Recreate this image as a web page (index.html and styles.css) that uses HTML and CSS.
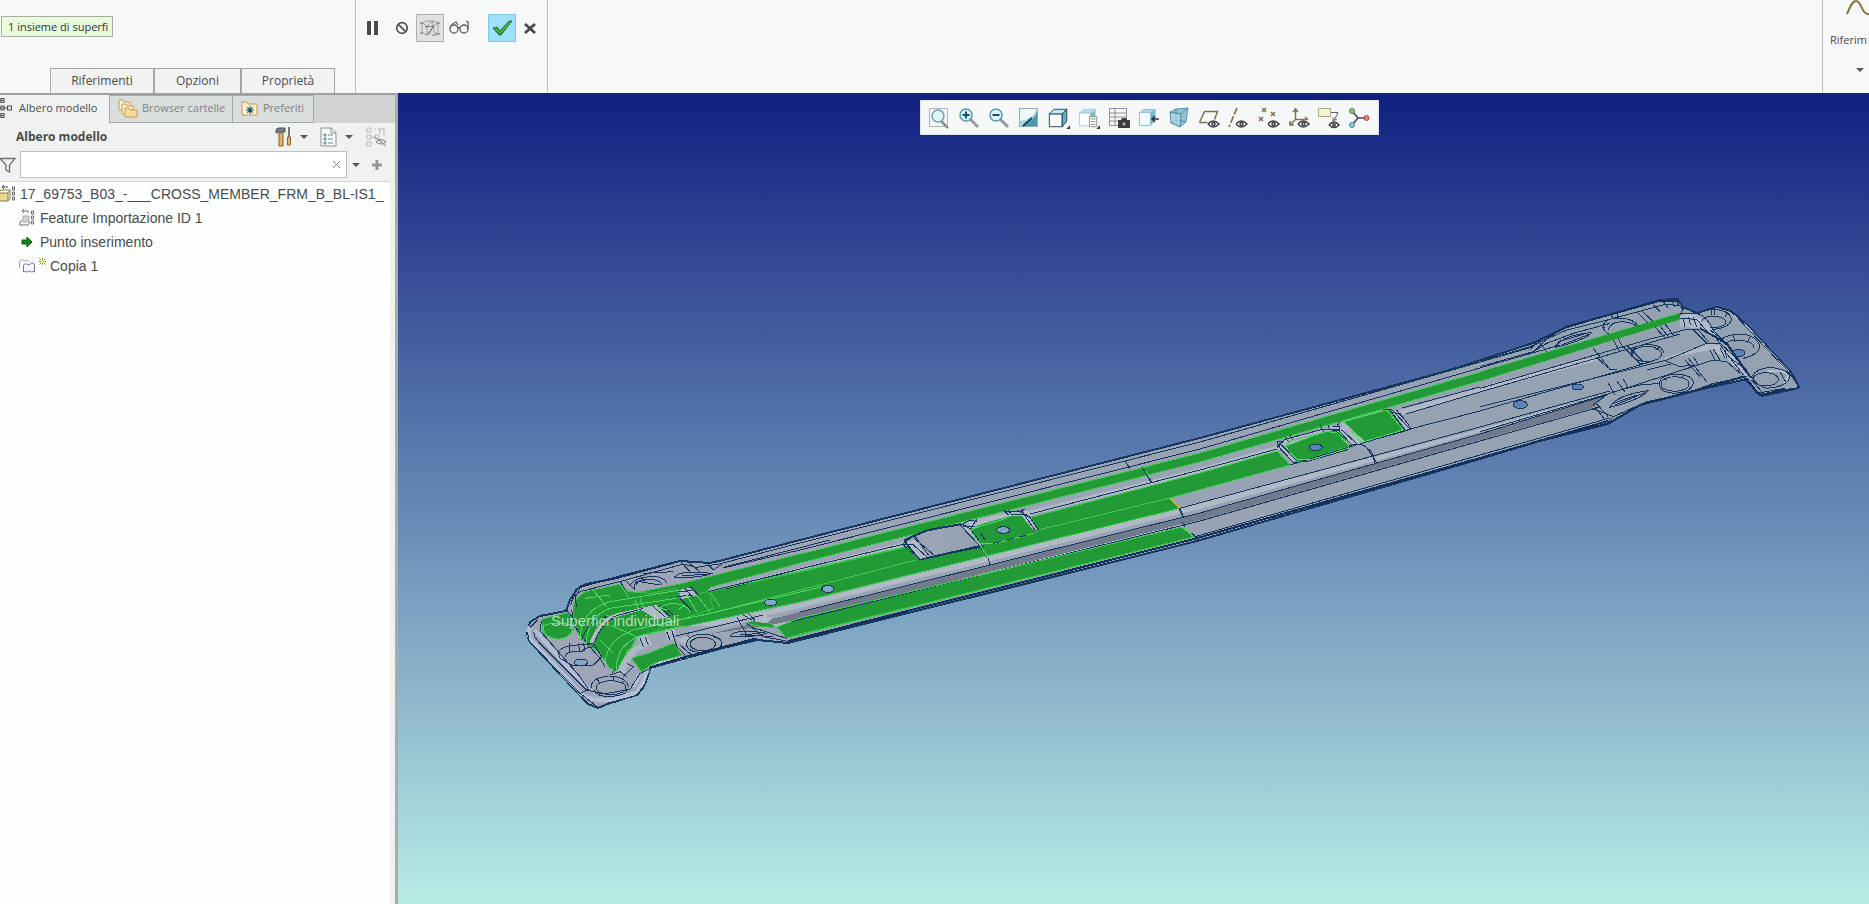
FILE: index.html
```html
<!DOCTYPE html>
<html lang="it">
<head>
<meta charset="utf-8">
<title>Albero modello</title>
<link rel="stylesheet" href="styles.css">
</head>
<body>
<header class="ribbon">
  <section class="dashboard">
    <input class="collector" type="text" aria-label="Insieme di superfici" value="1 insieme di superfi" readonly>
    <nav class="dash-tabs">
      <button class="t1">Riferimenti</button><button class="t2">Opzioni</button><button class="t3">Proprietà</button>
    </nav>
  </section>
  <section class="controls">
    <button class="ctl" aria-label="Pausa"><svg width="20" height="20"><path d="M4 3h4v14H4zM11 3h4v14h-4z" fill="#4a4a4c"/></svg></button>
    <button class="ctl" aria-label="Nessuna anteprima"><svg width="20" height="20" fill="none" stroke="#505052" stroke-width="1.7"><circle cx="10" cy="10" r="5.3"/><path d="M6.3 6.3l7.4 7.4"/></svg></button>
    <button class="ctl pressed" aria-label="Geometria"><svg width="22" height="20" fill="none" stroke="#8a8c8e" stroke-width=".8"><path d="M3 5v10l5 2V8l6-5M3 5l5-2h6M8 8L3 5M8 17l7-9v6l4 2V5l-4 3M14 3l5 2M14 3v7"/><path d="M1 5h3M1 15h3M9 17l5-8M13 17h4M18 5h3M17 16h4M6 9l9-1" stroke="#55585a"/></svg></button>
    <button class="ctl" aria-label="Anteprima"><svg width="22" height="20" fill="none" stroke="#5b5d60" stroke-width="1.3"><circle cx="6" cy="11" r="4"/><circle cx="16" cy="11" r="4"/><path d="M10 10q1-1 2 0M2 10Q3 6 8 4l2 3M20 11V4l-2-1"/></svg></button>
    <button class="ctl ok" aria-label="OK"><svg width="24" height="22"><path d="M3 11l4-1 3 4L19 4h3L11 18H9z" fill="#2b9a35" stroke="#17601f" stroke-width=".8"/><path d="M5 11l5 5M11 15L20 5" stroke="#6fce63" fill="none"/></svg></button>
    <button class="ctl close" aria-label="Annulla"><svg width="20" height="20"><path d="M5 6l10 9M15 6L5 15" stroke="#48494c" stroke-width="2.800"/></svg></button>
  </section>
  <section class="datum">
    <svg class="sine" width="40" height="18" fill="none" stroke="#87743e" stroke-width="2"><path d="M2 14C6 4 8 1 11 1c6 0 5 13 12 13 4 0 6-5 8-9"/></svg>
    <span>Riferim</span>
    <i class="caret"></i>
  </section>
</header>
<main class="workspace">
  <aside class="panel">
    <nav class="panel-tabs">
      <button class="tab active"><svg width="12" height="24" fill="none" stroke="#505558" stroke-width="1.200"><path d="M-1 4.500h4M-1 12h8M-1 19.500h4M1 2.500h3v4H1zM1 10h3v4H1zM1 17.500h3v4H1zM7.500 10h4v4h-4z"/></svg>Albero modello</button>
      <button class="tab folders"><svg width="20" height="20" stroke="#c39a55"><path d="M1 2h4l1 2h6v8H1z" fill="#fff3cf"/><path d="M4 6h4l1 2h6v8H4z" fill="#fff3cf"/><path d="M7 10h4l1 2h7v7H7z" fill="#f8dc98"/></svg>Browser cartelle</button>
      <button class="tab favorites"><svg width="18" height="18"><path d="M1 3h5l1 2h9v11H1z" fill="#fff1ca" stroke="#c39a55"/><path d="M9 7v8M5 11h8M6.300 8.300l5.400 5.400M11.700 8.300l-5.400 5.400" stroke="#155474" stroke-width="1.100"/></svg>Preferiti</button>
    </nav>
    <div class="panel-head">
      <h2>Albero modello</h2>
      <button aria-label="Impostazioni"><svg width="18" height="22"><path d="M4 7h4v13H4z" fill="#e2b568" stroke="#8a642d"/><path d="M1 5q0-3 3-3h6v4H4L1 7z" fill="#777c82" stroke="#4e5358"/><path d="M14 1v10" stroke="#777" stroke-width="2"/><path d="M12.500 11h3v8h-3z" fill="#e2b568" stroke="#8a642d"/></svg></button><i class="caret"></i>
      <button aria-label="Visualizza"><svg width="18" height="22" fill="none"><path d="M1 2h10l5 5v13H1z" fill="#f9fafa" stroke="#8b9194"/><path d="M11 2v5h5" stroke="#8b9194"/><path d="M4 8h2v2H4zM4 12h2v2H4zM4 16h2v2H4zM8 9h5M8 13h5M8 17h5" stroke="#3f7480" stroke-width=".8"/></svg></button><i class="caret"></i>
      <button aria-label="Mostra"><svg width="22" height="22" fill="none" stroke="#b4b8ba"><path d="M2 2h4v4H2zM2 9h4v4H2zM2 16h4v4H2zM6 11h4M10 9h4v4h-4zM9 3h2M13 3h6M19 3v7M15 3v5"/><path d="M11 16q5-5 10 0-5 4-10 0M10 11l11 9" stroke="#777b7e"/><circle cx="16" cy="16" r="1.500"/></svg></button>
    </div>
    <div class="filter">
      <svg width="18" height="16" viewBox="0 0 18 16" fill="none" stroke="#6e7174" stroke-width="1.300"><path d="M0 1.500h15L9.500 8v7L6 13V8z"/></svg>
      <label class="search"><input type="text" aria-label="Filtro"><svg width="9" height="9" stroke="#8b8d8f" fill="none"><path d="M1 1l7 7M8 1L1 8"/></svg></label>
      <i class="caret"></i>
      <button aria-label="Aggiungi"><svg width="12" height="12"><path d="M6 1v10M1 6h10" stroke="#939598" stroke-width="3"/></svg></button>
    </div>
    <ul class="tree">
      <li class="root"><svg width="16" height="20" fill="none"><path d="M-2 9h10v8h-10z" fill="#e9db8e" stroke="#87793a"/><path d="M-2 9l3-3h9v8l-2 3M8 9l2-3" stroke="#87793a"/><path d="M2 3h6M2 3l2-2M2 3l2 2" stroke="#444"/><path d="M12.500 3h2v3h-2zM12.500 8h2v3h-2zM12.500 13h2v3h-2z" stroke="#666"/></svg><span>17_69753_B03_-___CROSS_MEMBER_FRM_B_BL-IS1_</span></li>
      <li><svg width="16" height="20" fill="none" stroke="#6c6e70"><path d="M4 8h6v6H4z" fill="#cfd1d2" stroke="#a5a7a8"/><path d="M1 14v3h8l2-3M1 14l2-2M3 3h6M3 3l2-2M3 3l2 2M9 3v2"/><path d="M12.500 3h2v3h-2zM12.500 8h2v3h-2zM12.500 13h2v3h-2z"/></svg><span>Feature Importazione ID 1</span></li>
      <li><svg width="16" height="20"><path d="M3 8h5V5l5 5-5 5v-3H3z" fill="#16871b" stroke="#0a5c10"/></svg><span>Punto inserimento</span></li>
      <li class="copy"><svg width="16" height="20" fill="none"><path d="M0.500 12V6q1-3 3-2 2 2 5 0l2 2" stroke="#9ea0c0"/><path d="M4.500 16V9q2-2 3-1 3 2 5-1 2-1 3 2v7q-2-1-3 0-2-2-4 0-2-1-4 0z" fill="#fafafe" stroke="#6d6fa0"/></svg><svg width="9" height="20"><path d="M4.500 2v7M1 5.500h7M1.500 2.500l6 6M7.500 2.500l-6 6" stroke="#8c9010"/><path d="M3 4h3v3H3z" fill="#e8f23a"/></svg><span>Copia 1</span></li>
    </ul>
  </aside>
  <section class="viewport">
    <svg class="model" viewBox="398 93 1471 811" preserveAspectRatio="xMidYMid meet" role="img" aria-label="Traversa">
      <defs>
        <linearGradient id="metal" x1="0" y1="0" x2="1" y2="0"><stop offset="0" stop-color="#9ea6b6"/><stop offset="1" stop-color="#93a1b1"/></linearGradient>
      </defs>
      <!-- plate silhouette -->
      <path class="plate" d="M528 630L530 622 540 616 566 611 570 600 577 589 586 584 613 579 680 561 710 563 723 560 800 540 1200 438 1450 370 1533 343 1567 327 1660 300 1677 299 1683 307 1697 313 1717 307 1731 311 1747 325 1791 372 1799 387 1795 389 1762 396 1756 391 1747 379 1707 388 1640 405 1608 424 1540 441 1480 459 1197 541 800 640 788 643 757 640 660 663 650 668 643 688 637 695 612 702 598 708 588 704 530 642 527 635z"/>
      <!-- shaded walls along the bar -->
      <path class="light" d="M723 587L800 568 1200 468 1480 387 1600 355V360L1480 392 1200 473 800 573 723 592z"/>
      <path class="light" d="M690 626L800 603 1180 508 1480 429 1600 395V398L1480 432 1200 509 800 608 720 626z"/>
      <path class="dark" d="M710 634L800 612 1200 513 1480 434 1607 395 1590 409 1480 440 1200 520 800 619 770 625z"/>
      <path class="light" d="M770 625L800 619 1182 524 1182 528 780 628z"/>
      <!-- selected faces -->
      <g class="sel">
        <path d="M611 598Q640 592 680 584L800 554 1200 453 1480 372 1680 313 1681 319 1480 381 1200 462 800 563 711 587 706 592 680 598 645 602z"/>
        <path d="M684 598L708 592 800 572 907 547 918 559 964 546 980 545 970 532 980 524 1010 516 1024 513 1028 518 1200 473 1277 451 1290 465 1170 498 1181 508 800 602 650 634 628 637 680 618z"/>
        <path d="M777 627L800 618 1182 527 1194 537 800 634 787 638z"/>
        <path d="M1343 422L1388 409 1406 429 1363 442z"/>
        <path d="M1284 447L1330 430 1340 431 1350 446 1303 461 1295 461z"/>
        <path d="M749 622L772 625 776 628 768 627 754 625z"/>
      </g>
      <g class="edges">
        <path d="M723 563L800 543 1200 442 1480 362 1533 347M723 568L800 550 1200 449 1480 368 1560 345M726 589L800 569 904 544M1030 514L1200 470 1277 449M1406 414L1480 392 1680 334M1402 408L1480 387"/>
        <path d="M800 612L1200 513 1480 434 1607 395M790 622L1200 521 1480 441 1600 407M1170 498L1290 465 1406 430 1480 411 1650 362M1181 508L1480 427 1610 391M1194 537L1480 455 1610 418"/>
        <path class="bold" d="M788 641L1194 539 1480 458 1608 421"/>
      </g>
      <g class="glow"><path d="M800 554L1200 453 1480 372 1680 313M800 563L1200 462 1480 381M708 592L904 547M1028 518L1200 473 1277 451M650 634L800 602 1181 508M700 616L916 560M1038 530L1170 498 1290 465M777 627L800 618 1182 527M788 638L1194 537"/></g>

      <!-- left end -->
      <g class="part" transform="translate(510 530) scale(.333333)">
        <path class="sel" d="M190 225Q205 188 240 182L330 163 355 185 420 190 500 175 510 205 595 185 610 235 480 280 420 310 380 320 350 380 330 425 300 415 270 370 225 335 200 305 190 265z"/>
        <path class="sel" d="M95 268L175 248 190 280 185 310Q145 345 100 310z"/>
        <path class="sel" d="M365 385L415 370 490 340 515 375 430 400 395 425z"/>
        <path class="sel" d="M710 280L730 272 780 280 795 292 760 290z"/>
        <path class="light" d="M238 340Q262 268 320 250L400 232 440 225 475 262 440 268 395 240 310 264Q275 280 252 345z"/>
        <path class="light" d="M505 180L545 172 560 197 515 207zM383 320L412 313 428 345 395 355zM463 302L492 296 503 325 475 332zM320 435Q340 365 390 340L405 352Q360 370 345 430z"/>
        <path class="light" d="M500 327L760 258 790 262 770 280 720 272 560 312 520 345z"/>
        <path class="silver" d="M60 290Q52 310 62 330L215 492Q245 515 300 510L380 488 400 455 410 425 450 400 520 385M75 300L235 482M390 430L370 470"/>
        <path d="M60 292L82 270M52 305L58 335 210 490 265 533 380 495 408 460 422 415 520 388 740 328 840 338 960 310M72 305Q70 318 85 335L230 480 280 492 360 478 390 430 440 405M88 300L210 440 235 478 210 490M180 210L170 240 190 265M182 225Q190 185 230 180L340 152 520 102 560 112 640 100M200 230L195 205 210 175M240 173L245 183M330 152L345 180M345 150L375 180M390 137L405 155M400 130L490 125M510 93L540 125M530 94L570 125M640 88L600 98 540 96M640 100L610 120 590 98"/>
        <path d="M595 185L960 95M640 112L960 30M450 165L390 155Q370 150 375 180M470 160Q465 138 420 140 370 145 362 165M380 165Q380 148 420 148 455 150 455 165M495 140Q510 120 605 130 570 145 495 142zM515 138L590 132M510 205L545 240M525 175L550 205M540 170L565 195M505 185L545 182M500 200L550 195M430 230L465 260M445 228L480 258M455 225L490 255M310 260L400 235M252 340Q275 280 310 264M215 330Q230 275 290 260M390 325L400 350M405 320L415 345M470 305L480 330M485 300L500 350M490 320L760 255M495 345L530 380M510 345L545 375M680 260L710 315M700 255L725 270M715 250L735 272M705 315L790 320M660 318Q675 295 770 310 720 325 660 318zM690 315L750 310M710 280L760 320 840 335M720 290L830 325"/>
        <ellipse cx="578" cy="342" rx="38" ry="20"/><path d="M530 345Q530 315 580 312 640 318 634 345 625 368 575 368 532 365 530 345M540 325L532 315M610 320L625 325"/>
        <ellipse cx="303" cy="473" rx="45" ry="21"/><path d="M245 475Q238 445 295 438 350 440 355 470M260 445L268 458M310 438V452M345 450L335 460M252 480Q260 500 300 500 350 495 350 480M300 435L330 425 350 440M305 430L320 415M350 400L370 410 340 440"/>
        <ellipse class="hole low" cx="213" cy="397" rx="20" ry="10"/><path d="M145 370Q145 350 200 345L250 340 275 380 250 405 190 408 150 385zM165 380Q170 360 215 365L225 355 250 350M180 340L178 370M205 342L210 365M220 340L225 362M95 272L90 300M190 290Q190 325 140 328M185 240L195 290 235 345 270 385 285 410"/>
        <path class="bold" d="M210 170L510 93M420 412L530 380 740 325"/>
        <path class="green-line" d="M100 288Q140 270 190 288 190 325 140 328 98 320 100 288M210 330Q210 240 300 215L510 180M230 340Q230 260 300 235L500 205M285 400Q290 330 370 300L600 250 960 165M320 425Q315 340 400 315L520 288M225 205L300 195M250 180L290 230M330 163L355 200M390 205L400 235M375 210L385 240M600 185L630 230M560 195L600 245M530 195L560 245M300 285L380 320M270 330L310 370M325 415L355 360 390 340M445 250Q440 225 490 220 540 225 540 250 M450 235L475 240M525 225L505 238"/>
        <ellipse class="hole low" cx="782" cy="217" rx="19" ry="9"/><ellipse class="hole low" cx="952" cy="177" rx="18" ry="10"/>
      </g>

      <!-- pockets, left half -->
      <g class="part" transform="translate(800 430) scale(.333333)">
        <path class="plate" d="M315 335L335 320 385 300 480 283 495 288 540 348 400 380 360 388 330 355z"/>
        <path class="light" d="M318 335L345 330 385 380 360 388zM485 285L505 290 550 345 538 348z"/>
        <path class="light" d="M500 280L520 270 620 250 680 240 690 255 715 300 700 300 665 258 620 260 520 290z"/>
        <path d="M310 345L315 328 335 320 385 302 485 283 510 295 550 350 400 380 360 388 310 345 340 345 380 380M340 322L405 378M345 318L385 375M480 285L540 348M490 280L510 270 530 275M510 300L530 268M490 290L525 290M610 240L625 255M625 240L635 255 680 255M650 240L690 262 715 300 700 308M665 238L678 262 705 300M615 245L660 245 675 238M540 350L565 385 570 405M975 90L990 118M1045 140L1057 160M1140 235L1150 260"/>
        <path class="green-line" d="M505 300L620 265M512 305L540 342 580 342 700 310 715 300M540 345L565 385M1028 115L1052 145M1150 290L1185 322"/>
        <path d="M580 340L690 313M555 330L535 300" stroke-dasharray="8 5"/>
        <path class="orange" d="M1112 205L1140 235"/>
        <ellipse class="hole low" cx="610" cy="300" rx="20" ry="10"/><ellipse class="hole low" cx="84" cy="477" rx="18" ry="11"/>
      </g>

      <!-- pockets, right half -->
      <g class="part" transform="translate(1130 370) scale(.333333)">
        <path class="light" d="M440 230L460 210 570 180 625 165 670 215 690 222 662 225 625 185 590 183 480 210 465 225 500 272 485 275zM630 160L645 158 705 215 680 220zM780 120L800 125 840 175 825 182z"/>
        <path d="M440 215L450 235 490 277 530 275 650 240 665 225M455 225L500 272M440 230L465 208 570 180 625 180 665 225 690 222M570 165L580 185M595 165L598 180M610 170H630V182H605M630 155L620 170M615 180L660 230M635 180L685 225M760 118H785L840 178 820 185 690 220M780 120L825 180M785 128L810 130 845 178M800 120L815 140M480 195L488 210M465 200L475 215M690 222L710 232 740 278M700 225L725 245 735 280M35 290L65 340M145 410L158 440M155 455L165 470M185 490L205 510M440 215L460 215 440 235"/>
        <path class="green-line" d="M465 230L500 268 540 270 655 235 655 225 620 188 590 185 480 215zM640 155L770 120 820 180 695 217zM155 470L190 500"/>
        <path class="orange" d="M120 385L148 412"/>
        <ellipse class="hole" cx="557" cy="232" rx="20" ry="10"/>
      </g>

      <!-- right end -->
      <g class="part" transform="translate(1480 280) scale(.333333)">
        <path class="light" d="M600 105L640 100 680 125 730 185 720 190 660 145 600 140zM680 190L720 195 770 240 810 290 790 285 740 235 690 210 540 240z"/>
        <path class="silver thin" d="M760 105L800 140 925 275M625 110Q665 115 690 150M700 200Q735 205 770 245M860 275Q900 265 925 285L915 310"/>
        <path d="M0 245L150 200 260 150 400 115 560 72 600 78 610 90M0 260L160 215 200 190 280 160 390 130M150 210L175 182 200 215M165 195L245 150 260 140M160 215L220 160M225 200Q250 165 335 158 315 180 225 203M245 195L330 162M235 185L320 160M375 145Q360 125 400 115 460 110 475 140M385 150Q390 125 430 125 470 130 470 145M368 140Q372 155 390 165M400 115L390 100M415 113L410 100M470 95L505 130M485 92L520 125M520 75L540 95M550 65L565 85M575 60L585 82M590 70L610 85 600 105"/>
        <path d="M600 100L655 100Q680 110 700 150L735 190M600 115L650 118 690 165M0 325L500 180 620 148 655 150 685 185M0 380L560 240 680 190 720 190 760 225 815 295M0 455L390 340 530 295 700 240 740 245 780 280M625 110L632 135M610 115L615 140M640 112L650 140M525 140L555 175M540 138L565 170M555 132L580 165M400 180L420 215M415 175L430 205M340 205L390 268 410 270M350 232L385 265M430 200L480 250 500 250M440 195L490 245M690 210L705 240M700 208L720 240M720 205L735 235M735 210L740 235M615 240L660 290M625 235L680 305M640 230L655 255M385 310L405 345M410 302L435 335M430 298L445 325M340 375L375 420M350 372L385 410M380 345L340 375M640 150L680 190M550 240L600 260 640 255M500 270L580 250"/>
        <ellipse cx="500" cy="222" rx="44" ry="23"/><path d="M455 230Q445 200 500 193 550 195 550 220M450 205L465 215M540 200L530 210"/>
        <ellipse cx="585" cy="312" rx="42" ry="22"/><path d="M540 320Q530 285 590 282 640 285 640 310 635 335 585 340 545 338 540 320M550 292L560 300M610 285L605 295"/>
        <path d="M390 380Q410 345 505 332 480 360 390 382zM405 375L495 338M400 370L470 345M335 385L400 410 480 375M380 430L400 410 500 365 620 340 700 310 800 290M440 325L480 315 540 310"/>
        <path d="M655 105Q660 92 700 88 750 90 755 120 745 145 700 148M665 125Q670 108 700 108 740 112 738 130 725 145 690 143M695 88V105M705 86V105M745 95L735 110M720 185Q730 165 780 162 830 165 840 200 835 225 790 235M735 195Q745 175 790 182 820 185 822 205M760 165L765 185M810 170L800 190M815 290Q830 265 870 262 925 268 930 290 925 320 860 325 825 315 815 290M900 275L920 310M925 275L950 310 956 325 915 328 845 347M760 100L925 275M800 300L830 340 915 325M815 300L845 335M735 185L800 280M720 195L790 285M690 150L730 180M700 165L725 195M745 230L800 270"/>
        <ellipse cx="857" cy="298" rx="38" ry="20"/>
        <ellipse class="hole" cx="776" cy="219" rx="19" ry="11"/><ellipse class="hole" cx="121" cy="374" rx="21" ry="12"/><ellipse class="hole" cx="293" cy="321" rx="17" ry="9"/>
        <path class="bold" d="M160 190L260 140 540 62 600 65M680 322L480 375 385 430 180 482M680 322L790 290 840 345 920 328M660 145L740 190 810 290"/>
        <path class="band" d="M0 276L600 100V118L0 302z"/>
      </g>
      <text class="pick-label" x="551" y="626">Superfici individuali</text>
    </svg>
    <div class="toolbar" role="toolbar" aria-label="Vista">
      <button aria-label="Adatta"><svg viewBox="0 0 22 22"><path d="M1.500 1.500h18v18h-18z" stroke="#b0b4b7"/><path d="M13 14l7 7" stroke="#888d91" stroke-width="2.500"/><circle cx="10" cy="9" r="6" fill="#e1f4f8" stroke="#6ba0b4" stroke-width="1.500"/></svg></button>
      <button aria-label="Zoom avanti"><svg viewBox="0 0 22 22"><path d="M12 12l8 8" stroke="#969a9d" stroke-width="3"/><circle cx="8" cy="8" r="6" fill="#def4fa" stroke="#5799b0" stroke-width="1.500"/><path d="M8 4.500v7M4.500 8h7" stroke="#164f70" stroke-width="2"/></svg></button>
      <button aria-label="Zoom indietro"><svg viewBox="0 0 22 22"><path d="M12 12l8 8" stroke="#969a9d" stroke-width="3"/><circle cx="8" cy="8" r="6" fill="#def4fa" stroke="#5799b0" stroke-width="1.500"/><path d="M4.500 8h7" stroke="#164f70" stroke-width="2"/></svg></button>
      <button aria-label="Ridisegna"><svg viewBox="0 0 22 22"><path d="M1.500 1.500h18v18h-18z" fill="#a9d5df" stroke="#8badb8"/><path d="M2 2h17Q15 12 2 14z" fill="#eef6f7"/><path d="M6 19Q17 13 19 4v15z" fill="#4f97b0"/><path d="M5 19l9-8" stroke="#183f59" stroke-width="2"/></svg></button>
      <button aria-label="Stile"><svg viewBox="0 0 24 24"><path d="M1.500 7.500h14v14h-14z" fill="#fff" stroke="#173f57"/><path d="M1.500 7.500l5-5h14l-5 5z" fill="#c8e9ef" stroke="#173f57"/><path d="M15.500 7.500l5-5v13l-5 6z" fill="#67acc4" stroke="#173f57"/><path d="M24 20v4h-4z" fill="#333"/></svg></button>
      <button aria-label="Orientamenti"><svg viewBox="0 0 24 24"><path d="M1.500 6.500h12v14h-12z" fill="#fff" stroke="#a9cbd4"/><path d="M1.500 6.500l5-4h13l-5 4z" fill="#b7dfe8" stroke="#a9cbd4"/><path d="M14 7l5-4v8h-5z" fill="#7dbacb"/><path d="M12.500 10.500h8v11h-8z" fill="#fff" stroke="#8c8c80"/><path d="M14 13h5M14 16h5M14 19h5" stroke="#777"/><path d="M24 20v4h-4z" fill="#333"/></svg></button>
      <button aria-label="Viste"><svg viewBox="0 0 22 22"><path d="M1.500 1.500h17v17h-17zM1.500 6h17M1.500 10h17M1.500 14h17M7 1.500v17" stroke="#8e9295"/><path d="M10 13h3l1-2h4l1 2h3v8H10z" fill="#3c3e40"/><circle cx="16" cy="17" r="2.500" fill="#999" stroke="#222"/></svg></button>
      <button aria-label="Normale"><svg viewBox="0 0 22 22"><path d="M1.500 5.500h11v13h-11z" fill="#f5fcfd" stroke="#8fc3d0"/><path d="M1.500 5.500l4-3h12l-5 3z" fill="#aadde8" stroke="#8fc3d0"/><path d="M12.500 5.500l5-3v11l-5 5z" fill="#75bccd"/><path d="M21 12h-6M17 9l-3 3 3 3" stroke="#333" stroke-width="1.500"/></svg></button>
      <button aria-label="Prospettiva"><svg viewBox="0 0 22 22"><path d="M2 5l6-3 12-1-2 14-6 5-9-4z" fill="#8fc3d5" stroke="#5b95ab"/><path d="M2 5l11 2 7-6M13 7l-1 13M8 2v11l-5 3M8 13l10 2" stroke="#447f97" stroke-width=".8"/><path d="M3 6l9 2v10l-8-3z" fill="#c0e1ea" fill-opacity=".6"/></svg></button>
      <button aria-label="Piani"><svg viewBox="0 0 22 22"><path d="M1.500 15.500l5-11h13l-3 8M1.500 15.500h8" stroke="#80704b" stroke-width="1.500"/><g class="eye"><path d="M10 17q5-6 11 0-6 6-11 0"/><circle cx="15.500" cy="17" r="1.500"/></g></svg></button>
      <button aria-label="Assi"><svg viewBox="0 0 22 22"><path d="M9 1L1 20" stroke="#80704b" stroke-width="1.700" stroke-dasharray="7 2"/><g class="eye"><path d="M8 17q5-6 11 0-6 6-11 0"/><circle cx="13.500" cy="17" r="1.500"/></g></svg></button>
      <button aria-label="Punti"><svg viewBox="0 0 22 22"><path d="M4 1l4 4M8 1L4 5M13 5l4 4M17 5l-4 4M1 10l4 4M5 10l-4 4" stroke="#80704b" stroke-width="1.500"/><g class="eye"><path d="M10 17q5-6 11 0-6 6-11 0"/><circle cx="15.500" cy="17" r="1.500"/></g></svg></button>
      <button aria-label="Sistemi di coordinate"><svg viewBox="0 0 22 22"><path d="M7.500 13V2M5 5l2.500-3L10 5M7.500 12.500H20M17 10l3 2.500M7.500 12.500L2 18M2 14v4h4" stroke="#80704b" stroke-width="1.500"/><g class="eye"><path d="M10 17q5-6 11 0-6 6-11 0"/><circle cx="15.500" cy="17" r="1.500"/></g></svg></button>
      <button aria-label="Annotazioni"><svg viewBox="0 0 22 22"><path d="M0.500 1.500h12v8h-12z" fill="#f6f3d0" stroke="#aaa583"/><path d="M13 5.500h7l-4 8M15 10v4l4-2" stroke="#65645f"/><g class="eye"><path d="M11 18q5-6 10 0-5 5-10 0"/><circle cx="16" cy="18" r="1.300"/></g></svg></button>
      <button aria-label="Centro di rotazione"><svg viewBox="0 0 22 22"><path d="M4 4l6 7h8M10 11l-6 7" stroke="#444" stroke-width="1.500"/><circle cx="4" cy="4" r="2.500" fill="#8fc385" stroke="#57804e"/><circle cx="18.500" cy="11" r="2.500" fill="#ef7c79" stroke="#b04542"/><circle cx="4" cy="18" r="2.500" fill="#86cde0" stroke="#458aa0"/></svg></button>
    </div>
  </section>
</main>
</body>
</html>
```

FILE: styles.css
```css
* { box-sizing: border-box; }
body {
  margin: 0;
  height: 100vh;
  display: flex;
  flex-direction: column;
  overflow: hidden;
  font: 12px/16px "Open Sans", "Noto Sans", sans-serif;
  color: #4a4b4d;
  background: #f7f8f8;
}
button { font: inherit; color: inherit; border: 0; padding: 0; background: none; }
svg { display: block; flex: none; }
.caret {
  flex: none;
  border: 4px solid transparent;
  border-top-color: #55585a;
  border-bottom: 0;
}

.ribbon { display: flex; height: 93px; flex: none; background: #f7f8f8; }
.dashboard {
  width: 356px;
  flex: none;
  display: flex;
  flex-direction: column;
  justify-content: space-between;
  align-items: flex-start;
  padding: 16px 0 0 1px;
  border-right: 1px solid #bfc1c1;
}
.collector {
  width: 112px;
  height: 21px;
  padding: 0 2px 0 6px;
  border: 1px solid #a9ada6;
  background: #e8fbdc;
  font: inherit;
  font-size: 11px;
  color: #333;
}
.dash-tabs { display: flex; padding-left: 49px; }
.dash-tabs button { height: 25px; border: 1px solid #a5a7a7; border-bottom: 0; background: #f1f3f3; }
.dash-tabs .t1 { width: 104px; }
.dash-tabs .t2 { width: 87px; }
.dash-tabs .t3 { width: 94px; }
.controls {
  width: 192px;
  flex: none;
  display: flex;
  align-items: flex-start;
  padding: 14px 0 0 2px;
  border-right: 1px solid #bfc1c1;
}
.ctl { width: 29px; height: 28px; display: flex; align-items: center; justify-content: center; }
.ctl.pressed { width: 28px; border: 1px solid #aeb1b1; background: #dfe2e2; }
.ctl.ok { width: 28px; margin-left: 15px; border: 1px solid #7fc8e6; background: #9fe1fc; }
.ctl.close { width: 27px; }
.datum {
  margin-left: auto;
  width: 47px;
  border-left: 1px solid #bfc1c1;
  overflow: hidden;
  display: flex;
  flex-direction: column;
  padding-left: 7px;
}
.datum .sine { margin-left: 15px; }
.datum span { padding: 14px 0 20px; font-size: 11px; }
.datum .caret { margin-left: 26px; align-self: flex-start; }

.workspace { flex: 1; min-height: 0; display: flex; }
.panel {
  width: 398px;
  flex: none;
  display: flex;
  flex-direction: column;
  background: #f0f2f2;
  border-top: 2px solid #9fa1a1;
  border-right: 3px solid #a9acae;
}
.panel-tabs { display: flex; background: #d0d3d2; height: 28px; font-size: 11px; }
.tab {
  display: flex;
  align-items: center;
  gap: 4px;
  padding: 0 0 2px 8px;
  border: 1px solid #a5a8a8;
  border-left: 0;
  background: #d9dddc;
  color: #7e8284;
  white-space: nowrap;
}
.tab.active {
  width: 110px;
  padding: 0 0 2px;
  gap: 7px;
  border-width: 0 1px 0 0;
  background: #f0f2f2;
  color: #4a4b4d;
}
.tab.folders { width: 123px; }
.tab.favorites { width: 81px; }
.panel-head { display: flex; align-items: center; height: 28px; padding: 0 8px 0 16px; }
.panel-head h2 { margin: 0; flex: 1; font-size: 12px; font-weight: 700; }
.panel-head .caret { margin: 0 12px 0 7px; }
.filter { display: flex; align-items: center; height: 27px; }
.search {
  width: 327px;
  height: 27px;
  margin: 0 5px 0 2px;
  padding-right: 5px;
  display: flex;
  align-items: center;
  border: 1px solid #bcc0c0;
  background: #fff;
}
.search input { flex: 1; min-width: 0; border: 0; background: none; font: inherit; }
.filter button { margin-left: 11px; }
.tree {
  flex: 1;
  margin: 3px 5px 0 0;
  padding: 0;
  list-style: none;
  border-top: 1px solid #d5d8d8;
  background: #fdfefe;
  font: 14px/24px "Liberation Sans", Arial, sans-serif;
  overflow: hidden;
}
.tree li { display: flex; align-items: center; gap: 5px; height: 24px; padding-left: 19px; white-space: nowrap; }
.tree .root { padding-left: 0; gap: 4px; }
.tree .copy { gap: 3px; }

.viewport {
  flex: 1;
  min-width: 0;
  position: relative;
  background: linear-gradient(#102080, #b8ece6);
}
.model { width: 100%; height: 100%; }
.toolbar {
  position: absolute;
  top: 7px;
  left: 50%;
  margin-left: -214px;
  display: flex;
  padding: 0 4px 0 3px;
  height: 35px;
  align-items: center;
  background: #f6f8f8;
  border: 1px solid #dde1ea;
}
.toolbar button { width: 30px; height: 32px; display: flex; align-items: center; justify-content: center; }
.toolbar svg { width: 22px; height: 22px; fill: none; }
.eye { fill: #fff; stroke: #3f4247; stroke-width: 1.6; }

.model path, .model ellipse { vector-effect: non-scaling-stroke; shape-rendering: crispEdges; }
.model .plate { fill: url(#metal); stroke: #17365f; stroke-width: 2; }
.model .light { fill: #b1b8c6; stroke: none; }
.model .dark { fill: #717b8b; }
.model .sel, .model .sel path { fill: #229a35; stroke: #38bd4b; stroke-width: 1; }
.model .band { fill: #229a35; stroke: none; }
.edges, .part { fill: none; stroke: #17365f; stroke-width: 1; }
.model .bold { stroke: #12305c; stroke-width: 2; }
.glow { fill: none; stroke: #3fcb53; stroke-width: 1; }
.part .green-line { stroke: #4fd964; stroke-width: 1; }
.part .silver { stroke: #b4bed4; stroke-width: 4; }
.part .silver.thin { stroke-width: 2; }
.part .orange { stroke: #d9a34a; stroke-width: 1.5; }
.part .hole { fill: #5c83b8; stroke: #17365f; }
.part .hole.low { fill: #82a6c6; }
.pick-label { font: 15px "Liberation Sans", Arial, sans-serif; fill: #b4dfbd; }
```
